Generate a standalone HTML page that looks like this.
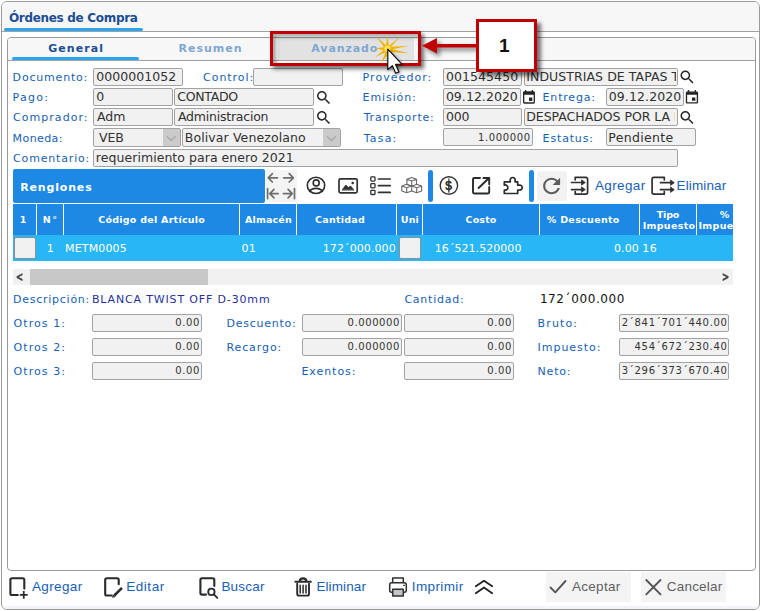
<!DOCTYPE html>
<html lang="es"><head><meta charset="utf-8"><title>Órdenes de Compra</title>
<style>
html,body{margin:0;padding:0;background:#fff;}
body{width:761px;height:611px;position:relative;overflow:hidden;font-family:"DejaVu Sans","Liberation Sans",sans-serif;font-size:11px;color:#1661b3;}
.a{position:absolute;white-space:nowrap;}
.inp{position:absolute;box-sizing:border-box;height:17px;border:1px solid #a2a2a2;background:#f1f1f1;border-radius:2px;}
.sep{position:absolute;top:204px;width:1px;height:31px;background:#fff;}
svg{position:absolute;overflow:visible;}
</style></head><body>
<!-- window -->
<div class="a" style="left:1px;top:1px;width:759px;height:609px;box-sizing:border-box;border:1px solid #9a9a9a;border-radius:6px;background:#fff;overflow:hidden;">
  <div class="a" style="left:0;top:0;width:758px;height:30px;background:#f7f7f7;"></div>
  <div class="a" style="left:0;top:604px;width:758px;height:3px;background:#f1f5f9;"></div>
</div>
<div class="a" style="left:2px;top:31px;width:757px;height:1px;background:#a0a0a0;"></div>
<div class="a" style="left:4px;top:28px;width:139px;height:3px;background:#2aa5ee;border-radius:2px;"></div>
<!-- panel -->
<div class="a" style="left:7px;top:37px;width:749px;height:534px;box-sizing:border-box;border:1px solid #9a9a9a;border-radius:4px;background:#fff;overflow:hidden;">
  <div class="a" style="left:0;top:0;width:749px;height:22px;background:#f7f7f7;"></div>
  <div class="a" style="left:270px;top:0;width:136px;height:22px;background:#e2e2e2;"></div>
</div>
<div class="a" style="left:8px;top:60px;width:747px;height:1px;background:#a0a0a0;"></div>
<div class="a" style="left:12px;top:57px;width:127px;height:3px;background:#2aa5ee;border-radius:2px;"></div>

<!-- form inputs -->
<div class="inp" style="left:93px;top:68px;width:90px;height:18px;"></div>
<div class="inp" style="left:253px;top:68px;width:90px;height:18px;"></div>
<div class="inp" style="left:443px;top:68px;width:79px;height:18px;"></div>
<div class="inp" style="left:524px;top:68px;width:154px;height:18px;"></div>

<div class="inp" style="left:93px;top:88px;width:80px;height:18px;"></div>
<div class="inp" style="left:174px;top:88px;width:140px;height:18px;"></div>
<div class="inp" style="left:443px;top:88px;width:78px;height:18px;"></div>
<div class="inp" style="left:606px;top:88px;width:78px;height:18px;"></div>

<div class="inp" style="left:93px;top:108px;width:80px;height:18px;"></div>
<div class="inp" style="left:174px;top:108px;width:140px;height:18px;"></div>
<div class="inp" style="left:443px;top:108px;width:79px;height:18px;"></div>
<div class="inp" style="left:524px;top:108px;width:154px;height:18px;"></div>

<div class="inp" style="left:93px;top:128px;width:88px;height:19px;"></div>
<div class="a" style="left:163px;top:129px;width:17px;height:17px;background:#cbcbcb;"></div>
<div class="inp" style="left:182px;top:128px;width:159px;height:19px;"></div>
<div class="a" style="left:323px;top:129px;width:17px;height:17px;background:#cbcbcb;"></div>
<div class="inp" style="left:443px;top:128px;width:90px;height:18px;"></div>
<div class="inp" style="left:606px;top:128px;width:90px;height:18px;"></div>

<div class="inp" style="left:93px;top:149px;width:585px;height:18px;"></div>

<!-- renglones bar -->
<div class="a" style="left:13px;top:169px;width:252px;height:34px;background:#1e88e5;border-radius:2px;"></div>
<div class="a" style="left:266px;top:170px;width:31px;height:32px;background:#f4f4f4;"></div>
<div class="a" style="left:428px;top:170px;width:5px;height:32px;background:#1e88e5;border-radius:2.5px;"></div>
<div class="a" style="left:529px;top:170px;width:5px;height:32px;background:#1e88e5;border-radius:2.5px;"></div>
<div class="a" style="left:537px;top:171px;width:30px;height:30px;background:#f2f2f2;border-radius:3px;"></div>

<!-- table -->
<div class="a" style="left:13px;top:204px;width:720px;height:32px;background:#1e88e5;"></div>
<div class="sep" style="left:36px"></div>
<div class="sep" style="left:63px"></div>
<div class="sep" style="left:239px"></div>
<div class="sep" style="left:296px"></div>
<div class="sep" style="left:396px"></div>
<div class="sep" style="left:422px"></div>
<div class="sep" style="left:539px"></div>
<div class="sep" style="left:639px"></div>
<div class="sep" style="left:696px"></div>
<div class="a" style="left:13px;top:235px;width:720px;height:26px;background:#29b6f6;"></div>
<div class="a" style="left:14px;top:237px;width:21.5px;height:22px;box-sizing:border-box;background:#f0f0f0;border:1px solid #8f8f8f;border-radius:2px;"></div>
<div class="a" style="left:399px;top:237px;width:22px;height:22px;box-sizing:border-box;background:#f0f0f0;border:1px solid #8f8f8f;border-radius:2px;"></div>
<!-- scrollbar -->
<div class="a" style="left:13px;top:269px;width:720px;height:15.5px;background:#f1f1f1;"></div>
<div class="a" style="left:30px;top:269px;width:178px;height:15.5px;background:#c8c8c8;"></div>

<!-- totals inputs -->
<div class="inp" style="left:92px;top:314px;width:110px;height:18px;"></div>
<div class="inp" style="left:302px;top:314px;width:100px;height:18px;"></div>
<div class="inp" style="left:404px;top:314px;width:110px;height:18px;"></div>
<div class="inp" style="left:619px;top:314px;width:110px;height:18px;"></div>
<div class="inp" style="left:92px;top:338px;width:110px;height:18px;"></div>
<div class="inp" style="left:302px;top:338px;width:100px;height:18px;"></div>
<div class="inp" style="left:404px;top:338px;width:110px;height:18px;"></div>
<div class="inp" style="left:619px;top:338px;width:110px;height:18px;"></div>
<div class="inp" style="left:92px;top:362px;width:110px;height:18px;"></div>
<div class="inp" style="left:404px;top:362px;width:110px;height:18px;"></div>
<div class="inp" style="left:619px;top:362px;width:110px;height:18px;"></div>

<!-- bottom buttons -->
<div class="a" style="left:546px;top:572px;width:85px;height:30px;background:#f4f4f4;border-radius:2px;"></div>
<div class="a" style="left:641px;top:572px;width:85px;height:30px;background:#f4f4f4;border-radius:2px;"></div>
<!-- icons -->
<svg style="left:0;top:0" width="761" height="611" viewBox="0 0 761 611" fill="none" stroke-linecap="round" stroke-linejoin="round">
<!-- magnifiers -->
<g id="mag1" fill="#262626" stroke="none">
  <path transform="translate(314.8 88.8) scale(0.743)" d="M15.5 14h-.79l-.28-.27C15.41 12.59 16 11.11 16 9.500 16 5.910 13.090 3 9.500 3S3 5.910 3 9.500 5.910 16 9.500 16c1.610 0 3.090-.59 4.230-1.570l.27.28v.79l5 4.990L20.490 19l-4.990-5zm-6 0C7.010 14 5 11.990 5 9.500S7.010 5 9.500 5 14 7.010 14 9.500 11.990 14 9.500 14z"/>
  <path transform="translate(314.8 108.8) scale(0.743)" d="M15.5 14h-.79l-.28-.27C15.41 12.59 16 11.11 16 9.500 16 5.910 13.090 3 9.500 3S3 5.910 3 9.500 5.910 16 9.500 16c1.610 0 3.090-.59 4.230-1.570l.27.28v.79l5 4.990L20.490 19l-4.990-5zm-6 0C7.010 14 5 11.990 5 9.500S7.010 5 9.500 5 14 7.010 14 9.500 11.990 14 9.500 14z"/>
  <path transform="translate(678.3 68.3) scale(0.743)" d="M15.5 14h-.79l-.28-.27C15.41 12.59 16 11.11 16 9.500 16 5.910 13.090 3 9.500 3S3 5.910 3 9.500 5.910 16 9.500 16c1.610 0 3.090-.59 4.230-1.570l.27.28v.79l5 4.990L20.490 19l-4.990-5zm-6 0C7.010 14 5 11.990 5 9.500S7.010 5 9.500 5 14 7.010 14 9.500 11.990 14 9.500 14z"/>
  <path transform="translate(678.3 108.8) scale(0.743)" d="M15.5 14h-.79l-.28-.27C15.41 12.59 16 11.11 16 9.500 16 5.910 13.090 3 9.500 3S3 5.910 3 9.500 5.910 16 9.500 16c1.610 0 3.090-.59 4.230-1.570l.27.28v.79l5 4.990L20.490 19l-4.990-5zm-6 0C7.010 14 5 11.990 5 9.500S7.010 5 9.500 5 14 7.010 14 9.500 11.990 14 9.500 14z"/>
</g>
<!-- calendars -->
<g fill="#262626" stroke="none">
  <path transform="translate(521 89.200) scale(0.665 0.690)" d="M17 12h-5v5h5v-5zM16 1v2H8V1H6v2H5c-1.110 0-1.990.9-1.990 2L3 19c0 1.100.89 2 2 2h14c1.100 0 2-.9 2-2V5c0-1.100-.9-2-2-2h-1V1h-2zm3 18H5V8h14v11z"/>
  <path transform="translate(683.750 89.400) scale(0.683 0.670)" d="M17 12h-5v5h5v-5zM16 1v2H8V1H6v2H5c-1.110 0-1.990.9-1.990 2L3 19c0 1.100.89 2 2 2h14c1.100 0 2-.9 2-2V5c0-1.100-.9-2-2-2h-1V1h-2zm3 18H5V8h14v11z"/>
</g>
<!-- select chevrons -->
<g stroke="#a4a4a4" stroke-width="1.200">
  <path d="M167.200 136.600 L171.200 140.500 L175.200 136.600"/>
  <path d="M327.500 136.600 L331.500 140.500 L335.500 136.600"/>
</g>
<!-- arrows block -->
<g stroke="#6e6e6e" stroke-width="1.700">
  <path d="M277.500 177.800 H268.200 M272.400 173.600 L268.200 177.800 L272.400 182"/>
  <path d="M283.700 177.800 H293.400 M289.200 173.600 L293.400 177.800 L289.200 182"/>
  <path d="M267.600 188.600 V198.600 M278.200 193.600 H269.800 M274 189.400 L269.800 193.600 L274 197.800"/>
  <path d="M294.500 188.600 V198.600 M283.400 193.600 H292.300 M288.100 189.400 L292.300 193.600 L288.100 197.800"/>
</g>
<!-- person -->
<g stroke="#2c2c2c" stroke-width="1.600">
  <ellipse cx="316" cy="185.400" rx="8.700" ry="8.100"/>
  <circle cx="316.200" cy="182.900" r="3"/>
  <path d="M309.600 191.500 C311.500 187.300 320.500 187.300 322.400 191.500"/>
</g>
<!-- image -->
<g stroke="#303030" stroke-width="1.700">
  <rect x="339" y="178.800" width="18.200" height="14" rx="1.500"/>
  <path d="M342.300 189.800 L345.800 185 L348.300 187.600 L350.500 186 L353.800 189.800 Z" fill="#303030" stroke-width="0.800"/>
  <circle cx="352.600" cy="183" r="0.900" fill="#303030" stroke-width="0.800"/>
</g>
<!-- list -->
<g stroke="#303030">
  <g stroke-width="1.300">
  <rect x="370.800" y="176.900" width="4.200" height="4.200" rx="0.800"/>
  <rect x="370.800" y="183.600" width="4.200" height="4.200" rx="0.800"/>
  <rect x="370.800" y="190.300" width="4.200" height="4.200" rx="0.800"/>
  </g>
  <path stroke-width="1.700" d="M378.500 179 H390.200 M378.500 185.700 H390.200 M378.500 192.400 H390.200"/>
</g>
<!-- boxes -->
<g stroke="#686868" stroke-width="1.100">
  <path d="M411.700 177.400 L416.500 179.200 V184.500 L411.700 186.300 L406.900 184.500 V179.200 Z M406.900 179.200 L411.700 181 L416.500 179.200 M411.700 181 V186.300"/>
  <path d="M406.700 184.200 L411.700 186 V191 L406.700 192.800 L401.800 191 V186 Z M401.800 186 L406.700 187.800 L411.700 186 M406.700 187.800 V192.800"/>
  <path d="M416.700 184.200 L421.600 186 V191 L416.700 192.800 L411.700 191 M411.700 186 L416.700 187.800 L421.600 186 M416.700 187.800 V192.800"/>
</g>
<!-- dollar circle -->
<circle cx="448.900" cy="185.500" r="8.700" stroke="#303030" stroke-width="1.400"/>
<path d="M448.900 178.700 V192.300" stroke="#2c2c2c" stroke-width="1.100"/>
<!-- external link -->
<g stroke="#2a2a2a" stroke-width="1.900">
  <path d="M480 178 H474.200 Q473 178 473 179.200 V192.300 Q473 193.500 474.200 193.500 H488 Q489.200 193.500 489.200 192.300 V187"/>
  <path d="M478.600 188 L489 178 M483.400 178 H489.200 V184.300"/>
</g>
<!-- puzzle -->
<path stroke="#2c2c2c" stroke-width="1.700" d="M504.300 181.900 H510.300 V180.700 A2.500 2.500 0 1 1 515.100 180.700 V181.900 H517.700 V185.200 H519.300 A2.450 2.450 0 1 1 519.300 190 H517.700 V193.500 H504.300 V190 A2.600 2.600 0 1 0 504.300 185.200 Z"/>
<!-- refresh -->
<path fill="#5c5c5c" stroke="none" transform="translate(538.900 173.600) scale(1.060 1.030)" d="M17.650 6.350C16.200 4.900 14.210 4 12 4c-4.420 0-7.990 3.580-7.990 8s3.570 8 7.990 8c3.730 0 6.840-2.550 7.730-6h-2.080c-.82 2.330-3.040 4-5.650 4-3.310 0-6-2.690-6-6s2.690-6 6-6c1.660 0 3.140.69 4.220 1.780L13 11h7V4l-2.350 2.350z"/>
<!-- add row -->
<g stroke="#303030" stroke-width="1.700">
  <path d="M575.200 179.800 V177.300 H585.700 Q587.600 177.300 587.600 179.200 V192.200 Q587.600 194.100 585.700 194.100 H575.200 V191.600"/>
  <path d="M571.500 182.500 H583 M571.500 189.600 H583"/>
  <path d="M581.800 180 L585.300 182.500 L581.800 185 Z M581.800 187.100 L585.300 189.600 L581.800 192.100 Z" fill="#303030" stroke-width="0.800"/>
</g>
<!-- eliminar row -->
<g stroke="#303030" stroke-width="1.700">
  <path d="M664.300 179.800 V177.300 H654 Q652.100 177.300 652.100 179.200 V192.200 Q652.100 194.100 654 194.100 H664.300 V191.600"/>
  <path d="M660.500 182.700 H672 M660.500 189.700 H672"/>
  <path d="M670.800 180.200 L674.300 182.700 L670.800 185.200 Z M670.800 187.200 L674.300 189.700 L670.800 192.200 Z" fill="#303030" stroke-width="0.800"/>
</g>
<!-- bottom: agregar -->
<g stroke="#2a2a2a" stroke-width="2.100">
  <path d="M17.800 595 H12 Q10.400 595 10.400 593.400 V579.800 Q10.400 578.200 12 578.200 H22.700 Q24.300 578.200 24.300 579.800 V588.600"/>
  <path stroke-width="1.800" stroke-linecap="butt" d="M19.800 594.800 H27.700 M23.750 591.100 V598.700"/>
</g>
<!-- editar -->
<g stroke="#2a2a2a" stroke-width="2.100">
  <path d="M111.600 595.500 H106.800 Q105.200 595.500 105.200 593.900 V579.800 Q105.200 578.200 106.800 578.200 H117.100 Q118.700 578.200 118.700 579.800 V584.300"/>
  <path stroke-width="2.500" stroke-linecap="butt" d="M114.300 595.500 L122 587.800"/>
  <path stroke-width="0.600" fill="#2c2c2c" d="M112.500 597.200 L113.300 594.800 L115 596.500 Z"/>
</g>
<!-- buscar -->
<g stroke="#2a2a2a" stroke-width="2.100">
  <path d="M206 594.600 H202 Q200.400 594.600 200.400 593 V579.800 Q200.400 578.200 202 578.200 H212.700 Q214.300 578.200 214.300 579.800 V586"/>
  <circle cx="211.400" cy="591.900" r="3.200" stroke-width="1.800"/>
  <path stroke-width="1.900" d="M213.900 594.400 L217.300 597.800"/>
</g>
<!-- trash -->
<g stroke="#2a2a2a" stroke-width="1.900">
  <path stroke-width="2.100" d="M295.400 581.700 H310.800 M299.800 581.200 Q300 578.400 303.100 578.400 Q306.200 578.400 306.400 581.200"/>
  <path d="M297.200 583.800 V593.700 Q297.200 595.600 299.100 595.600 H307.100 Q309 595.600 309 593.700 V583.800"/>
  <path stroke-width="1.500" d="M300.200 585.300 V593 M303.100 585.300 V593 M306 585.300 V593"/>
</g>
<!-- printer -->
<g stroke="#303030" stroke-width="1.500">
  <path d="M392.700 582.600 V578 H403.300 V582.600"/>
  <rect x="389.700" y="582.800" width="16.600" height="9.400" rx="2"/>
  <rect x="392.700" y="589.300" width="10.600" height="6.600" fill="#c4c4c4"/>
  <circle cx="404" cy="585.300" r="0.500" fill="#303030" stroke-width="0.600"/>
</g>
<!-- chevrons -->
<g stroke="#222" stroke-width="1.800">
  <path d="M475.800 586.300 L484 580.700 L492.200 586.300"/>
  <path d="M475.800 593.300 L484 587.500 L492.200 593.300"/>
</g>
<!-- check / x -->
<path stroke="#555" stroke-width="1.900" d="M550.500 587.500 L555.300 592.300 L565.500 581"/>
<path stroke="#555" stroke-width="1.900" d="M646.300 580 L660.500 594.300 M660.500 580 L646.300 594.300"/>
</svg>

<!-- texts -->
<span class="a" style="left:8.90px;top:11.20px;font-family:'DejaVu Sans','Liberation Sans',sans-serif;font-size:12px;font-weight:bold;color:#1a4e94;letter-spacing:-0.305px;">Órdenes de Compra</span>
<span class="a" style="left:48.15px;top:41.70px;font-family:'DejaVu Sans','Liberation Sans',sans-serif;font-size:11px;font-weight:bold;color:#1a4f94;letter-spacing:1.061px;">General</span>
<span class="a" style="left:178.49px;top:41.70px;font-family:'DejaVu Sans','Liberation Sans',sans-serif;font-size:11px;font-weight:bold;color:#7fa7d4;letter-spacing:1.001px;">Resumen</span>
<span class="a" style="left:311.35px;top:41.70px;font-family:'DejaVu Sans','Liberation Sans',sans-serif;font-size:11px;font-weight:bold;color:#7fa7d4;letter-spacing:0.873px;">Avanzado</span>
<span class="a" style="left:12.62px;top:71.00px;font-family:'DejaVu Sans','Liberation Sans',sans-serif;font-size:11px;font-weight:normal;color:#1661b3;letter-spacing:0.803px;">Documento:</span>
<span class="a" style="left:203.08px;top:71.00px;font-family:'DejaVu Sans','Liberation Sans',sans-serif;font-size:11px;font-weight:normal;color:#1661b3;letter-spacing:0.962px;">Control:</span>
<span class="a" style="left:362.62px;top:71.00px;font-family:'DejaVu Sans','Liberation Sans',sans-serif;font-size:11px;font-weight:normal;color:#1661b3;letter-spacing:1.046px;">Proveedor:</span>
<span class="a" style="left:12.62px;top:91.00px;font-family:'DejaVu Sans','Liberation Sans',sans-serif;font-size:11px;font-weight:normal;color:#1661b3;letter-spacing:1.263px;">Pago:</span>
<span class="a" style="left:362.62px;top:91.00px;font-family:'DejaVu Sans','Liberation Sans',sans-serif;font-size:11px;font-weight:normal;color:#1661b3;letter-spacing:0.892px;">Emisión:</span>
<span class="a" style="left:542.62px;top:91.00px;font-family:'DejaVu Sans','Liberation Sans',sans-serif;font-size:11px;font-weight:normal;color:#1661b3;letter-spacing:0.806px;">Entrega:</span>
<span class="a" style="left:13.08px;top:111.00px;font-family:'DejaVu Sans','Liberation Sans',sans-serif;font-size:11px;font-weight:normal;color:#1661b3;letter-spacing:1.031px;">Comprador:</span>
<span class="a" style="left:363.73px;top:111.00px;font-family:'DejaVu Sans','Liberation Sans',sans-serif;font-size:11px;font-weight:normal;color:#1661b3;letter-spacing:0.796px;">Transporte:</span>
<span class="a" style="left:12.62px;top:132.00px;font-family:'DejaVu Sans','Liberation Sans',sans-serif;font-size:11px;font-weight:normal;color:#1661b3;letter-spacing:0.412px;">Moneda:</span>
<span class="a" style="left:363.73px;top:132.00px;font-family:'DejaVu Sans','Liberation Sans',sans-serif;font-size:11px;font-weight:normal;color:#1661b3;letter-spacing:1.181px;">Tasa:</span>
<span class="a" style="left:542.62px;top:132.00px;font-family:'DejaVu Sans','Liberation Sans',sans-serif;font-size:11px;font-weight:normal;color:#1661b3;letter-spacing:0.842px;">Estatus:</span>
<span class="a" style="left:13.08px;top:152.00px;font-family:'DejaVu Sans','Liberation Sans',sans-serif;font-size:11px;font-weight:normal;color:#1661b3;letter-spacing:0.826px;">Comentario:</span>
<span class="a" style="left:96.18px;top:69.30px;font-family:'DejaVu Sans','Liberation Sans',sans-serif;font-size:12.5px;font-weight:normal;color:#303030;letter-spacing:0.060px;">0000001052</span>
<span class="a" style="left:445.88px;top:69.30px;font-family:'DejaVu Sans','Liberation Sans',sans-serif;font-size:12.5px;font-weight:normal;color:#303030;letter-spacing:0.084px;">001545450</span>
<span class="a" style="left:526.27px;top:69.30px;font-family:'DejaVu Sans','Liberation Sans',sans-serif;font-size:12.5px;font-weight:normal;color:#303030;letter-spacing:0.061px;">INDUSTRIAS DE TAPAS T</span>
<span class="a" style="left:96.18px;top:89.30px;font-family:'DejaVu Sans','Liberation Sans',sans-serif;font-size:12.5px;font-weight:normal;color:#303030;letter-spacing:0.000px;">0</span>
<span class="a" style="left:177.30px;top:89.30px;font-family:'DejaVu Sans','Liberation Sans',sans-serif;font-size:12.5px;font-weight:normal;color:#303030;letter-spacing:-0.284px;">CONTADO</span>
<span class="a" style="left:445.88px;top:89.30px;font-family:'DejaVu Sans','Liberation Sans',sans-serif;font-size:12.5px;font-weight:normal;color:#303030;letter-spacing:0.042px;">09.12.2020</span>
<span class="a" style="left:608.68px;top:89.30px;font-family:'DejaVu Sans','Liberation Sans',sans-serif;font-size:12.5px;font-weight:normal;color:#303030;letter-spacing:0.120px;">09.12.2020</span>
<span class="a" style="left:96.90px;top:109.30px;font-family:'DejaVu Sans','Liberation Sans',sans-serif;font-size:12.5px;font-weight:normal;color:#303030;letter-spacing:0.000px;">Adm</span>
<span class="a" style="left:177.90px;top:109.30px;font-family:'DejaVu Sans','Liberation Sans',sans-serif;font-size:12.5px;font-weight:normal;color:#303030;letter-spacing:-0.215px;">Administracion</span>
<span class="a" style="left:445.88px;top:109.30px;font-family:'DejaVu Sans','Liberation Sans',sans-serif;font-size:12.5px;font-weight:normal;color:#303030;letter-spacing:-0.200px;">000</span>
<span class="a" style="left:526.27px;top:109.30px;font-family:'DejaVu Sans','Liberation Sans',sans-serif;font-size:12.5px;font-weight:normal;color:#303030;letter-spacing:-0.035px;">DESPACHADOS POR LA</span>
<span class="a" style="left:98.90px;top:130.30px;font-family:'DejaVu Sans','Liberation Sans',sans-serif;font-size:12.5px;font-weight:normal;color:#303030;letter-spacing:0.000px;">VEB</span>
<span class="a" style="left:184.77px;top:130.30px;font-family:'DejaVu Sans','Liberation Sans',sans-serif;font-size:12.5px;font-weight:normal;color:#303030;letter-spacing:0.104px;">Bolivar Venezolano</span>
<span class="a" style="left:477.90px;top:132.00px;font-family:'DejaVu Sans','Liberation Sans',sans-serif;font-size:10px;font-weight:normal;color:#333;letter-spacing:0.649px;">1.000000</span>
<span class="a" style="left:608.27px;top:130.30px;font-family:'DejaVu Sans','Liberation Sans',sans-serif;font-size:12.5px;font-weight:normal;color:#303030;letter-spacing:0.320px;">Pendiente</span>
<span class="a" style="left:95.86px;top:150.30px;font-family:'DejaVu Sans','Liberation Sans',sans-serif;font-size:12.5px;font-weight:normal;color:#303030;letter-spacing:0.047px;">requerimiento para enero 2021</span>
<span class="a" style="left:20.19px;top:180.70px;font-family:'DejaVu Sans','Liberation Sans',sans-serif;font-size:11px;font-weight:bold;color:#fff;letter-spacing:0.840px;">Renglones</span>
<span class="a" style="left:594.97px;top:178.00px;font-family:'Liberation Sans','DejaVu Sans',sans-serif;font-size:13.5px;font-weight:normal;color:#1760b8;letter-spacing:0.370px;">Agregar</span>
<span class="a" style="left:676.59px;top:178.00px;font-family:'Liberation Sans','DejaVu Sans',sans-serif;font-size:13.5px;font-weight:normal;color:#1760b8;letter-spacing:0.124px;">Eliminar</span>
<span class="a" style="left:19.63px;top:214.00px;font-family:'DejaVu Sans','Liberation Sans',sans-serif;font-size:9.5px;font-weight:bold;color:#fff;letter-spacing:0.000px;">1</span>
<span class="a" style="left:42.83px;top:214.00px;font-family:'DejaVu Sans','Liberation Sans',sans-serif;font-size:9.5px;font-weight:bold;color:#fff;letter-spacing:1.504px;">N°</span>
<span class="a" style="left:98.23px;top:214.00px;font-family:'DejaVu Sans','Liberation Sans',sans-serif;font-size:9.5px;font-weight:bold;color:#fff;letter-spacing:0.259px;">Código del Artículo</span>
<span class="a" style="left:244.95px;top:214.00px;font-family:'DejaVu Sans','Liberation Sans',sans-serif;font-size:9.5px;font-weight:bold;color:#fff;letter-spacing:0.170px;">Almacén</span>
<span class="a" style="left:315.03px;top:214.00px;font-family:'DejaVu Sans','Liberation Sans',sans-serif;font-size:9.5px;font-weight:bold;color:#fff;letter-spacing:0.257px;">Cantidad</span>
<span class="a" style="left:400.83px;top:214.00px;font-family:'DejaVu Sans','Liberation Sans',sans-serif;font-size:9.5px;font-weight:bold;color:#fff;letter-spacing:0.118px;">Uni</span>
<span class="a" style="left:465.53px;top:214.00px;font-family:'DejaVu Sans','Liberation Sans',sans-serif;font-size:9.5px;font-weight:bold;color:#fff;letter-spacing:0.162px;">Costo</span>
<span class="a" style="left:546.69px;top:214.00px;font-family:'DejaVu Sans','Liberation Sans',sans-serif;font-size:9.5px;font-weight:bold;color:#fff;letter-spacing:0.323px;">% Descuento</span>
<span class="a" style="left:656.65px;top:209.00px;font-family:'DejaVu Sans','Liberation Sans',sans-serif;font-size:9.5px;font-weight:bold;color:#fff;letter-spacing:-0.108px;">Tipo</span>
<span class="a" style="left:642.63px;top:220.00px;font-family:'DejaVu Sans','Liberation Sans',sans-serif;font-size:9.5px;font-weight:bold;color:#fff;letter-spacing:0.330px;">Impuesto</span>
<span class="a" style="left:719.69px;top:209.00px;font-family:'DejaVu Sans','Liberation Sans',sans-serif;font-size:9.5px;font-weight:bold;color:#fff;letter-spacing:0.000px;">%</span>
<span class="a" style="left:46.79px;top:241.50px;font-family:'DejaVu Sans','Liberation Sans',sans-serif;font-size:11px;font-weight:normal;color:#fff;letter-spacing:0.000px;">1</span>
<span class="a" style="left:65.12px;top:241.50px;font-family:'DejaVu Sans','Liberation Sans',sans-serif;font-size:11px;font-weight:normal;color:#fff;letter-spacing:0.126px;">METM0005</span>
<span class="a" style="left:241.57px;top:241.50px;font-family:'DejaVu Sans','Liberation Sans',sans-serif;font-size:11px;font-weight:normal;color:#fff;letter-spacing:0.240px;">01</span>
<span class="a" style="left:322.79px;top:241.50px;font-family:'DejaVu Sans','Liberation Sans',sans-serif;font-size:11px;font-weight:normal;color:#fff;letter-spacing:0.095px;">172´000.000</span>
<span class="a" style="left:434.79px;top:241.50px;font-family:'DejaVu Sans','Liberation Sans',sans-serif;font-size:11px;font-weight:normal;color:#fff;letter-spacing:0.055px;">16´521.520000</span>
<span class="a" style="left:613.97px;top:241.50px;font-family:'DejaVu Sans','Liberation Sans',sans-serif;font-size:11px;font-weight:normal;color:#fff;letter-spacing:0.085px;">0.00</span>
<span class="a" style="left:642.29px;top:241.50px;font-family:'DejaVu Sans','Liberation Sans',sans-serif;font-size:11px;font-weight:normal;color:#fff;letter-spacing:0.401px;">16</span>
<span class="a" style="left:16.38px;top:269.70px;font-family:'DejaVu Sans','Liberation Sans',sans-serif;font-size:11.5px;font-weight:bold;color:#444;letter-spacing:0.000px;transform:scaleX(.74);transform-origin:0 0;-webkit-text-stroke:0.5px #444">&lt;</span>
<span class="a" style="left:721.68px;top:269.70px;font-family:'DejaVu Sans','Liberation Sans',sans-serif;font-size:11.5px;font-weight:bold;color:#444;letter-spacing:0.000px;transform:scaleX(.74);transform-origin:0 0;-webkit-text-stroke:0.5px #444">&gt;</span>
<span class="a" style="left:13.12px;top:292.50px;font-family:'DejaVu Sans','Liberation Sans',sans-serif;font-size:11px;font-weight:normal;color:#1661b3;letter-spacing:0.734px;">Descripción:</span>
<span class="a" style="left:91.92px;top:292.50px;font-family:'DejaVu Sans','Liberation Sans',sans-serif;font-size:11px;font-weight:normal;color:#26309c;letter-spacing:0.846px;">BLANCA TWIST OFF D-30mm</span>
<span class="a" style="left:404.38px;top:292.50px;font-family:'DejaVu Sans','Liberation Sans',sans-serif;font-size:11px;font-weight:normal;color:#1661b3;letter-spacing:0.777px;">Cantidad:</span>
<span class="a" style="left:539.88px;top:291.50px;font-family:'DejaVu Sans','Liberation Sans',sans-serif;font-size:12px;font-weight:normal;color:#111;letter-spacing:0.608px;">172´000.000</span>
<span class="a" style="left:13.58px;top:317.00px;font-family:'DejaVu Sans','Liberation Sans',sans-serif;font-size:11px;font-weight:normal;color:#1661b3;letter-spacing:1.068px;">Otros 1:</span>
<span class="a" style="left:13.58px;top:340.50px;font-family:'DejaVu Sans','Liberation Sans',sans-serif;font-size:11px;font-weight:normal;color:#1661b3;letter-spacing:1.068px;">Otros 2:</span>
<span class="a" style="left:13.58px;top:364.50px;font-family:'DejaVu Sans','Liberation Sans',sans-serif;font-size:11px;font-weight:normal;color:#1661b3;letter-spacing:1.068px;">Otros 3:</span>
<span class="a" style="left:226.42px;top:317.00px;font-family:'DejaVu Sans','Liberation Sans',sans-serif;font-size:11px;font-weight:normal;color:#1661b3;letter-spacing:0.764px;">Descuento:</span>
<span class="a" style="left:226.42px;top:340.50px;font-family:'DejaVu Sans','Liberation Sans',sans-serif;font-size:11px;font-weight:normal;color:#1661b3;letter-spacing:0.916px;">Recargo:</span>
<span class="a" style="left:301.42px;top:364.50px;font-family:'DejaVu Sans','Liberation Sans',sans-serif;font-size:11px;font-weight:normal;color:#1661b3;letter-spacing:0.960px;">Exentos:</span>
<span class="a" style="left:537.62px;top:317.00px;font-family:'DejaVu Sans','Liberation Sans',sans-serif;font-size:11px;font-weight:normal;color:#1661b3;letter-spacing:1.113px;">Bruto:</span>
<span class="a" style="left:537.62px;top:340.50px;font-family:'DejaVu Sans','Liberation Sans',sans-serif;font-size:11px;font-weight:normal;color:#1661b3;letter-spacing:0.961px;">Impuesto:</span>
<span class="a" style="left:537.62px;top:364.50px;font-family:'DejaVu Sans','Liberation Sans',sans-serif;font-size:11px;font-weight:normal;color:#1661b3;letter-spacing:0.778px;">Neto:</span>
<span class="a" style="left:175.34px;top:317.00px;font-family:'DejaVu Sans','Liberation Sans',sans-serif;font-size:10px;font-weight:normal;color:#333;letter-spacing:0.586px;">0.00</span>
<span class="a" style="left:487.34px;top:317.00px;font-family:'DejaVu Sans','Liberation Sans',sans-serif;font-size:10px;font-weight:normal;color:#333;letter-spacing:0.586px;">0.00</span>
<span class="a" style="left:175.34px;top:341.00px;font-family:'DejaVu Sans','Liberation Sans',sans-serif;font-size:10px;font-weight:normal;color:#333;letter-spacing:0.586px;">0.00</span>
<span class="a" style="left:487.34px;top:341.00px;font-family:'DejaVu Sans','Liberation Sans',sans-serif;font-size:10px;font-weight:normal;color:#333;letter-spacing:0.586px;">0.00</span>
<span class="a" style="left:175.34px;top:365.00px;font-family:'DejaVu Sans','Liberation Sans',sans-serif;font-size:10px;font-weight:normal;color:#333;letter-spacing:0.586px;">0.00</span>
<span class="a" style="left:487.34px;top:365.00px;font-family:'DejaVu Sans','Liberation Sans',sans-serif;font-size:10px;font-weight:normal;color:#333;letter-spacing:0.586px;">0.00</span>
<span class="a" style="left:347.54px;top:317.00px;font-family:'DejaVu Sans','Liberation Sans',sans-serif;font-size:10px;font-weight:normal;color:#333;letter-spacing:0.586px;">0.000000</span>
<span class="a" style="left:347.54px;top:341.00px;font-family:'DejaVu Sans','Liberation Sans',sans-serif;font-size:10px;font-weight:normal;color:#333;letter-spacing:0.586px;">0.000000</span>
<span class="a" style="left:621.77px;top:317.00px;font-family:'DejaVu Sans','Liberation Sans',sans-serif;font-size:10px;font-weight:normal;color:#333;letter-spacing:0.711px;">2´841´701´440.00</span>
<span class="a" style="left:634.51px;top:341.00px;font-family:'DejaVu Sans','Liberation Sans',sans-serif;font-size:10px;font-weight:normal;color:#333;letter-spacing:0.714px;">454´672´230.40</span>
<span class="a" style="left:621.74px;top:365.00px;font-family:'DejaVu Sans','Liberation Sans',sans-serif;font-size:10px;font-weight:normal;color:#333;letter-spacing:0.713px;">3´296´373´670.40</span>
<span class="a" style="left:31.97px;top:578.70px;font-family:'Liberation Sans','DejaVu Sans',sans-serif;font-size:13.5px;font-weight:normal;color:#1760b8;letter-spacing:0.370px;">Agregar</span>
<span class="a" style="left:126.19px;top:578.70px;font-family:'Liberation Sans','DejaVu Sans',sans-serif;font-size:13.5px;font-weight:normal;color:#1760b8;letter-spacing:0.550px;">Editar</span>
<span class="a" style="left:221.39px;top:578.70px;font-family:'Liberation Sans','DejaVu Sans',sans-serif;font-size:13.5px;font-weight:normal;color:#1760b8;letter-spacing:0.200px;">Buscar</span>
<span class="a" style="left:316.39px;top:578.70px;font-family:'Liberation Sans','DejaVu Sans',sans-serif;font-size:13.5px;font-weight:normal;color:#1760b8;letter-spacing:0.109px;">Eliminar</span>
<span class="a" style="left:411.75px;top:578.70px;font-family:'Liberation Sans','DejaVu Sans',sans-serif;font-size:13.5px;font-weight:normal;color:#1760b8;letter-spacing:0.389px;">Imprimir</span>
<span class="a" style="left:571.97px;top:578.70px;font-family:'Liberation Sans','DejaVu Sans',sans-serif;font-size:13.5px;font-weight:normal;color:#606060;letter-spacing:0.287px;">Aceptar</span>
<span class="a" style="left:666.81px;top:578.70px;font-family:'Liberation Sans','DejaVu Sans',sans-serif;font-size:13.5px;font-weight:normal;color:#606060;letter-spacing:0.197px;">Cancelar</span>
<span class="a" style="left:445.03px;top:178.30px;font-family:'Liberation Sans','DejaVu Sans',sans-serif;font-size:13px;font-weight:bold;color:#2c2c2c;letter-spacing:0.000px;">$</span>
<span class="a" style="left:698.43px;top:220.00px;font-family:'DejaVu Sans','Liberation Sans',sans-serif;font-size:9.5px;font-weight:bold;color:#fff;letter-spacing:0.330px;">Impuesto</span>
<!-- clip cover for the cut-off last column -->
<div class="a" style="left:733px;top:204px;width:22px;height:32px;background:#fff;"></div>
<div class="a" style="left:676px;top:69px;width:1px;height:16px;background:#f1f1f1;"></div><div class="a" style="left:677px;top:70px;width:1px;height:14px;background:#a2a2a2;"></div><div class="a" style="left:678px;top:69px;width:2px;height:16px;background:#fff;"></div>
<div class="a" style="left:673.800px;top:112px;width:1px;height:9px;background:#f5dcae;"></div>
<!-- annotation overlay -->
<div class="a" style="left:270px;top:31px;width:151px;height:35px;box-sizing:border-box;border:3px solid #c00000;box-shadow:3px 3px 4px rgba(0,0,0,.55), inset 3px 3px 4px rgba(0,0,0,.35);"></div>
<svg style="left:0;top:0;filter:drop-shadow(3px 3px 2px rgba(0,0,0,.5));" width="761" height="611" viewBox="0 0 761 611">
  <path d="M422 45.7 L437 38 L437 43.9 L477 43.900 L477 47.500 L437 47.500 L437 53.400 Z" fill="#c00000"/>
</svg>
<div class="a" style="left:476px;top:19px;width:61px;height:53px;box-sizing:border-box;border:3px solid #c00000;background:#fff;box-shadow:4px 4px 4px rgba(0,0,0,.55);"></div>

<span class="a" style="left:499.10px;top:35.00px;font-family:'Liberation Sans','DejaVu Sans',sans-serif;font-size:19px;font-weight:bold;color:#111;letter-spacing:0.000px;">1</span>
<!-- click starburst + mouse cursor -->
<svg style="left:0;top:0" width="761" height="611" viewBox="0 0 761 611">
  <g transform="translate(387.500 48.700)">
    <path fill="#f4b400" d="M0 -12.700 L1.500 -3 L12.500 -12 L3.500 -2 L21.500 -3 L5 0.500 L22 4.500 L3 3.300 L8 9 L1.500 4 L-6.500 14.800 L-2 3.500 L-12.500 8.500 L-4 1.500 L-12.500 -0.500 L-3.500 -1.500 L-11 -12 L-1.500 -3.500 Z"/>
    <circle r="3.200" fill="#ffe45c"/>
  </g>
  <g style="filter:drop-shadow(1.500px 1.500px 1.500px rgba(0,0,0,.45))">
    <path d="M387.800 49.200 L387.800 69.600 L392.300 65.600 L395.700 73.300 L398.900 71.900 L395.600 64.400 L401.800 64.200 Z" fill="#fff" stroke="#111" stroke-width="1.200" stroke-linejoin="round"/>
  </g>
</svg>

</body></html>
